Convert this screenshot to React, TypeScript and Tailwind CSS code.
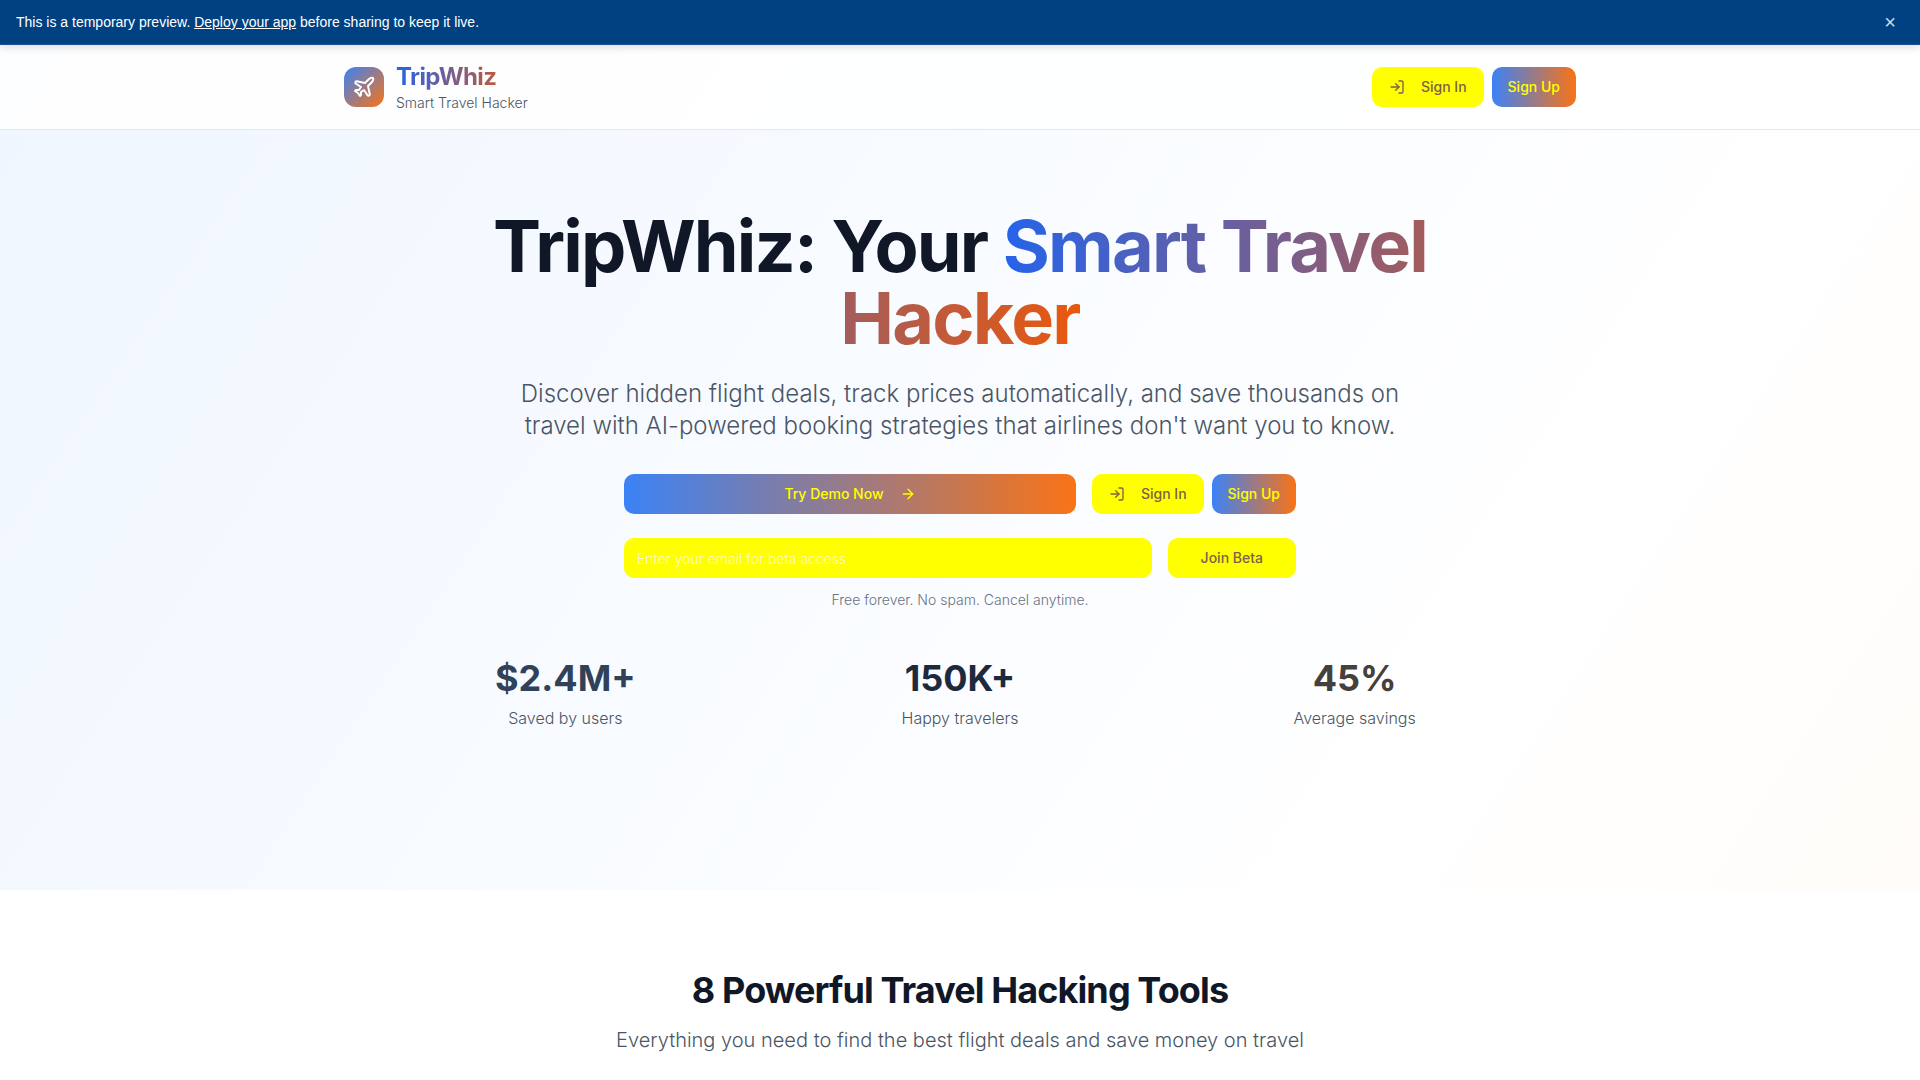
import { ArrowRight, LogIn, Plane } from "lucide-react";

const stats = [
  { value: "$2.4M+", label: "Saved by users", color: "text-slate-700" },
  { value: "150K+", label: "Happy travelers", color: "text-slate-800" },
  { value: "45%", label: "Average savings", color: "text-stone-700" },
];

function AuthButtons() {
  return (
    <div className="flex items-center gap-2">
      <button
        type="button"
        className="flex h-10 items-center gap-4 rounded-[10px] border border-[#ffff00] bg-[#ffff00] px-4 text-sm font-medium text-[#7d6149]"
      >
        <LogIn className="size-4" aria-hidden="true" />
        Sign In
      </button>
      <button
        type="button"
        className="h-10 rounded-[10px] bg-linear-to-r/srgb from-[#3b82f6] to-[#f97316] px-4 text-sm font-medium text-[#ffff00]"
      >
        Sign Up
      </button>
    </div>
  );
}

function PreviewBanner() {
  return (
    <div className="relative z-10 flex h-[45px] items-center justify-between border-b border-[#1a5490] bg-[#004182] px-4 font-['Liberation_Sans',sans-serif] text-sm font-normal text-white shadow-[0_2px_8px_rgba(0,0,0,0.15)]">
      <p>
        This is a temporary preview.{" "}
        <a href="#deploy" className="underline">
          Deploy your app
        </a>{" "}
        before sharing to keep it live.
      </p>
      <button
        type="button"
        aria-label="Dismiss"
        className="flex size-7 items-center justify-center text-xl leading-none text-white/80"
      >
        ×
      </button>
    </div>
  );
}

function Header() {
  return (
    <header className="border-b border-gray-200 bg-white/90">
      <div className="mx-auto flex max-w-7xl items-center justify-between px-6 py-4">
        <div className="flex items-center gap-3">
          <div className="flex size-10 items-center justify-center rounded-xl bg-linear-to-br/srgb from-[#3b82f6] to-[#f97316]">
            <Plane className="size-6 text-white" aria-hidden="true" />
          </div>
          <div>
            <div className="bg-linear-to-r/srgb from-[#2563eb] to-[#ea580c] bg-clip-text text-2xl leading-8 font-bold tracking-tight text-transparent">
              TripWhiz
            </div>
            <p className="text-sm text-gray-600">Smart Travel Hacker</p>
          </div>
        </div>
        <AuthButtons />
      </div>
    </header>
  );
}

function Hero() {
  return (
    <section className="px-6 pt-20 pb-40 text-center">
      <h1 className="mx-auto max-w-5xl text-7xl leading-none font-bold tracking-tight text-gray-900">
        TripWhiz: Your{" "}
        <span className="bg-linear-to-r/srgb from-[#2563eb] to-[#ea580c] bg-clip-text text-transparent">
          Smart Travel Hacker
        </span>
      </h1>
      <p className="mx-auto mt-6 max-w-4xl text-2xl leading-8 text-gray-600">
        Discover hidden flight deals, track prices automatically, and save thousands on travel with AI-powered booking
        strategies that airlines don't want you to know.
      </p>
      <div className="mx-auto mt-8 max-w-2xl">
        <div className="flex gap-4">
          <button
            type="button"
            className="flex h-10 flex-1 items-center justify-center gap-4 rounded-[10px] bg-linear-to-r/srgb from-[#3b82f6] to-[#f97316] text-sm font-medium text-[#ffff00]"
          >
            Try Demo Now
            <ArrowRight className="size-4" aria-hidden="true" />
          </button>
          <AuthButtons />
        </div>
        <form className="mt-6 flex gap-4" onSubmit={(e) => e.preventDefault()}>
          <input
            type="email"
            aria-label="Email address"
            placeholder="Enter your email for beta access"
            className="h-10 min-w-0 flex-1 rounded-[10px] border border-[#ffff00] bg-[#ffff00] px-3 py-2 text-sm placeholder:text-[#fafacd]"
          />
          <button
            type="submit"
            className="h-10 rounded-[10px] border border-[#ffff00] bg-[#ffff00] px-8 text-sm font-medium text-[#7d6149]"
          >
            Join Beta
          </button>
        </form>
        <p className="mt-3 text-sm text-gray-500">Free forever. No spam. Cancel anytime.</p>
      </div>
      <dl className="mx-auto mt-12 grid max-w-6xl grid-cols-3 gap-8">
        {stats.map((s) => (
          <div key={s.label} className="flex flex-col-reverse gap-2">
            <dt className="text-base text-gray-600">{s.label}</dt>
            <dd className={`text-4xl leading-10 font-bold ${s.color}`}>{s.value}</dd>
          </div>
        ))}
      </dl>
    </section>
  );
}

export default function App() {
  return (
    <div className="flex min-h-screen flex-col bg-linear-to-br/srgb from-[#eff6ff] via-white to-[#fff7ed] bg-[size:100%_2900px] bg-no-repeat font-['Inter',sans-serif] font-light">
      <PreviewBanner />
      <Header />
      <main className="flex grow flex-col">
        <Hero />
        <section className="grow bg-white px-6 pt-20 text-center">
          <h2 className="text-4xl leading-10 font-bold tracking-tight text-gray-900">8 Powerful Travel Hacking Tools</h2>
          <p className="mt-4 text-xl leading-7 text-gray-600">
            Everything you need to find the best flight deals and save money on travel
          </p>
        </section>
      </main>
    </div>
  );
}
